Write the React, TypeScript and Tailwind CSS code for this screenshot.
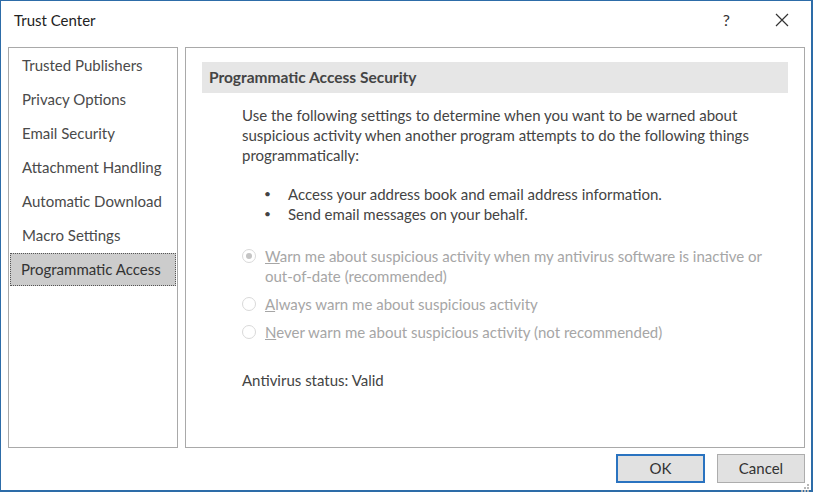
import React from 'react';

const font = { fontFamily: "'Segoe UI', Lato, 'Liberation Sans', sans-serif" };

const categories = [
  'Trusted Publishers',
  'Privacy Options',
  'Email Security',
  'Attachment Handling',
  'Automatic Download',
  'Macro Settings',
  'Programmatic Access',
];

function Radio({ checked }: { checked?: boolean }) {
  return (
    <span className="mt-[3px] flex h-[14px] w-[14px] shrink-0 items-center justify-center rounded-full border border-[#d9d9d9] bg-white">
      {checked && <span className="h-[6px] w-[6px] rounded-full bg-[#c4c4c4]" />}
    </span>
  );
}

export default function App() {
  return (
    <div
      className="flex h-[492px] w-[813px] flex-col border-t border-l border-r-2 border-b-2 border-[#2d6ca8] bg-white text-[#444]"
      style={font}
    >
      {/* title bar */}
      <div className="flex h-[38px] shrink-0 items-center pl-[13px] pr-[22px]">
        <span className="text-[15px] text-[#222]">Trust Center</span>
        <span className="ml-auto text-[16px] text-[#333]">?</span>
        <svg width="14" height="14" viewBox="0 0 14 14" className="ml-[45px]">
          <path d="M1 1 L13 13 M13 1 L1 13" stroke="#333" strokeWidth="1.2" />
        </svg>
      </div>

      <div className="flex flex-1 flex-col pt-[8px] pl-[7px] pr-[6px]">
        <div className="flex h-[401px] gap-[7px]">
          {/* categories */}
          <div className="w-[170px] shrink-0 border border-[#a9a9a9] p-px">
            {categories.map((c) => {
              const sel = c === 'Programmatic Access';
              return (
                <div
                  key={c}
                  className={
                    sel
                      ? 'flex h-[33px] items-center border border-dotted border-[#555] bg-[#cccccc] pl-[10px] text-[15px] text-[#333]'
                      : 'flex h-[34px] items-center pl-[12px] pb-px text-[15px] text-[#4a4a4a]'
                  }
                >
                  {c}
                </div>
              );
            })}
          </div>

          {/* content */}
          <div className="flex-1 border border-[#a9a9a9] pt-[14px] pl-[16px] pr-[16px]">
            <div className="flex h-[31px] items-center bg-[#e6e6e6] pl-[7px] text-[15.5px] font-bold text-[#444]">
              Programmatic Access Security
            </div>
            <div className="pl-[40px] pr-[8px] pt-[12px] text-[15px] leading-[20px]">
              <p className="pr-[20px]">
                Use the following settings to determine when you want to be warned about suspicious activity when another
                program attempts to do the following things programmatically:
              </p>
              <ul className="mt-[19px] pl-[22px]">
                <li className="flex">
                  <span className="w-[24px] text-[12px]">•</span>Access your address book and email address information.
                </li>
                <li className="flex">
                  <span className="w-[24px] text-[12px]">•</span>Send email messages on your behalf.
                </li>
              </ul>
              <div className="mt-[22px] flex flex-col gap-[8px] text-[#a6a6a6]">
                <label className="flex gap-[9px]">
                  <Radio checked />
                  <span>
                    <u>W</u>arn me about suspicious activity when my antivirus software is inactive or out-of-date
                    (recommended)
                  </span>
                </label>
                <label className="flex gap-[9px]">
                  <Radio />
                  <span>
                    <u>A</u>lways warn me about suspicious activity
                  </span>
                </label>
                <label className="flex gap-[9px]">
                  <Radio />
                  <span>
                    <u>N</u>ever warn me about suspicious activity (not recommended)
                  </span>
                </label>
              </div>
              <p className="mt-[28px] text-[#444]">Antivirus status: Valid</p>
            </div>
          </div>
        </div>

        {/* footer */}
        <div className="relative mt-[6px] flex justify-end gap-[12px]">
          <button className="h-[29px] w-[89px] border-2 border-[#2a73c0] bg-[#e1e1e1] text-[15px] text-[#333]">OK</button>
          <button className="h-[29px] w-[88px] border border-[#adadad] bg-[#e1e1e1] text-[15px] text-[#333]">Cancel</button>
          <svg width="8" height="8" viewBox="0 0 8 8" className="absolute right-[-4px] bottom-[-9px]">
            {[
              [6, 0],
              [3, 3],
              [6, 3],
              [0, 6],
              [3, 6],
              [6, 6],
            ].map(([x, y]) => (
              <rect key={`${x}-${y}`} x={x} y={y} width="2" height="2" fill="#b8b8b8" />
            ))}
          </svg>
        </div>
      </div>
    </div>
  );
}
